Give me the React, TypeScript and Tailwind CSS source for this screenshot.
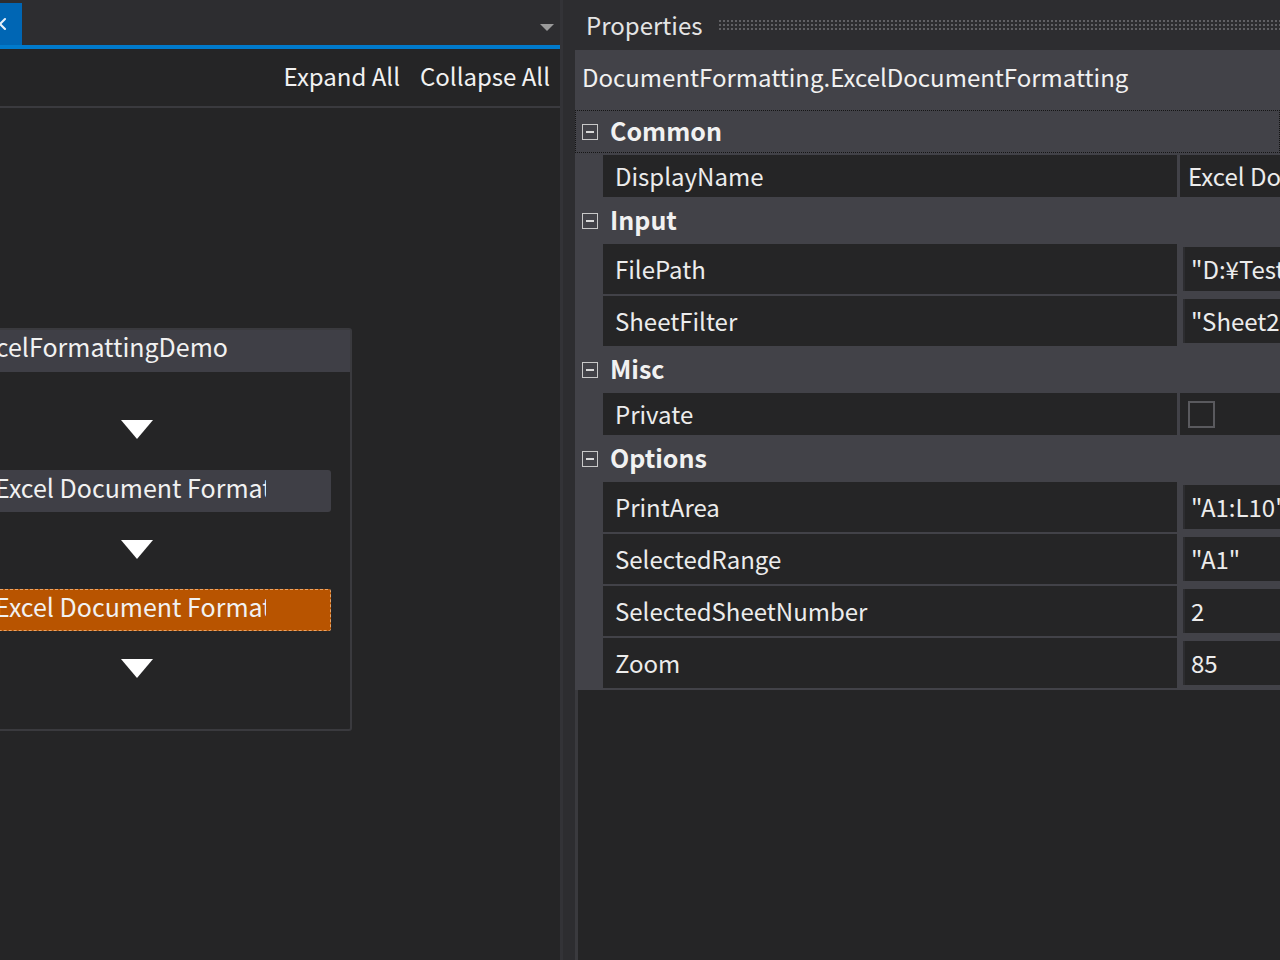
import { X } from 'lucide-react';

type Row =
  | { kind: 'cat'; label: string; focused?: boolean }
  | { kind: 'plain'; name: string; value: string }
  | { kind: 'text'; name: string; value: string }
  | { kind: 'check'; name: string };

const rows: Row[] = [
  { kind: 'cat', label: 'Common', focused: true },
  { kind: 'plain', name: 'DisplayName', value: 'Excel Document Formatting' },
  { kind: 'cat', label: 'Input' },
  { kind: 'text', name: 'FilePath', value: '"D:¥Test¥Sample.xlsx"' },
  { kind: 'text', name: 'SheetFilter', value: '"Sheet2"' },
  { kind: 'cat', label: 'Misc' },
  { kind: 'check', name: 'Private' },
  { kind: 'cat', label: 'Options' },
  { kind: 'text', name: 'PrintArea', value: '"A1:L10"' },
  { kind: 'text', name: 'SelectedRange', value: '"A1"' },
  { kind: 'text', name: 'SelectedSheetNumber', value: '2' },
  { kind: 'text', name: 'Zoom', value: '85' },
];

function FlowArrow() {
  return (
    <svg width="34" height="21" viewBox="0 0 34 21" className="block">
      <polygon points="1,1 33,1 17,20" fill="#ffffff" />
    </svg>
  );
}

function Activity({ selected }: { selected?: boolean }) {
  return (
    <div
      className={
        selected
          ? 'flex h-[42px] w-[388px] items-center rounded-[2px] border border-dashed border-[#e8a468] bg-[#b85400] pb-[6px] pl-[51px]'
          : 'flex h-[42px] w-[388px] items-center rounded-[3px] bg-[#3f3f46] pb-[6px] pl-[52px]'
      }
    >
      <span className="block w-[271px] overflow-hidden whitespace-nowrap text-[25px] text-[#f1f1f1]">
        Excel Document Formatting
      </span>
    </div>
  );
}

function CollapseBox() {
  return (
    <div className="flex h-[16px] w-[16px] items-center justify-center border border-[#c8c8c8]">
      <div className="h-[2px] w-[8px] bg-[#d8d8d8]" />
    </div>
  );
}

function PropRow({ row }: { row: Row }) {
  if (row.kind === 'cat') {
    return (
      <div
        className={
          'flex h-[43px] items-center gap-[12px] bg-[#424248] pl-[6px] ' +
          (row.focused ? 'border border-dotted border-[#151515]' : 'border border-transparent')
        }
      >
        <CollapseBox />
        <span className="pb-[2px] text-[25px] font-bold text-[#f1f1f1]">{row.label}</span>
      </div>
    );
  }
  const tall = row.kind === 'text';
  return (
    <div className={'flex pl-[28px] ' + (tall ? 'h-[50px]' : 'h-[42px]')}>
      <div className="flex w-[574px] items-center bg-[#252526] pl-[12px] text-[24px] text-[#ececec]">
        {row.name}
      </div>
      {row.kind === 'plain' && (
        <div className="ml-[3px] flex flex-1 items-center overflow-hidden whitespace-nowrap bg-[#252526] pl-[8px] text-[24px] text-[#ececec]">
          {row.value}
        </div>
      )}
      {row.kind === 'check' && (
        <div className="ml-[3px] flex flex-1 items-center bg-[#252526] pl-[8px]">
          <div className="h-[27px] w-[27px] border-2 border-[#5a5a5e]" />
        </div>
      )}
      {row.kind === 'text' && (
        <div className="my-[3px] ml-[6px] flex flex-1 items-center overflow-hidden whitespace-nowrap border-l-2 border-[#2d2d30] bg-[#252526] pl-[6px] text-[24px] text-[#ececec]">
          {row.value}
        </div>
      )}
    </div>
  );
}

export default function App() {
  return (
    <div className="flex h-[960px] w-[1280px] overflow-hidden bg-[#2d2d30] font-['Noto_Sans_CJK_JP','Noto_Sans',sans-serif]">
      {/* designer panel */}
      <div className="flex w-[563px] shrink-0 flex-col border-r-[3px] border-[#333337]">
        <div className="flex h-[45px] items-end bg-[#2d2d30]">
          <div className="flex h-[42px] w-[22px] items-center overflow-hidden bg-[#0066b4]">
            <X size={20} strokeWidth={2.5} className="-ml-[10px] text-[#e6f0fa]" />
          </div>
          <div className="flex h-full flex-1 items-center justify-end pr-[6px] pt-[10px]">
            <svg width="14" height="8" viewBox="0 0 14 8">
              <polygon points="0,0 14,0 7,7" fill="#9a9a9a" />
            </svg>
          </div>
        </div>
        <div className="h-[4px] bg-[#007acc]" />
        <div className="flex h-[59px] items-center justify-end gap-[20px] border-b-2 border-[#3a3a3e] bg-[#252526] pb-[4px] pr-[10px] text-[24px] text-[#f1f1f1]">
          <span>Expand All</span>
          <span>Collapse All</span>
        </div>
        <div className="flex-1 overflow-hidden bg-[#252526] pt-[220px]">
          <div className="-ml-[78px] w-[430px] rounded-[3px] border-2 border-[#3a3a3e]">
            <div className="flex h-[42px] items-center bg-[#3f3f46] pb-[8px] pl-[46px] text-[25px] text-[#f1f1f1]">
              ExcelFormattingDemo
            </div>
            <div className="flex flex-col items-center pb-[50px] pt-[47px]">
              <FlowArrow />
              <div className="h-[30px]" />
              <Activity />
              <div className="h-[27px]" />
              <FlowArrow />
              <div className="h-[29px]" />
              <Activity selected />
              <div className="h-[27px]" />
              <FlowArrow />
            </div>
          </div>
        </div>
      </div>

      <div className="w-[12px] shrink-0 bg-[#2d2d30]" />

      {/* properties panel */}
      <div className="flex w-[705px] shrink-0 flex-col">
        <div className="flex h-[50px] items-center gap-[16px] bg-[#2d2d30] pl-[11px]">
          <span className="text-[24px] text-[#e4e4e4]">Properties</span>
          <div className="h-[12px] flex-1 bg-[radial-gradient(circle,#606064_0.9px,transparent_1.2px)] bg-[length:4px_4px]" />
        </div>
        <div className="flex h-[60px] items-center bg-[#424248] pb-[6px] pl-[7px] text-[24px] text-[#f1f1f1]">
          DocumentFormatting.ExcelDocumentFormatting
        </div>
        <div className="flex flex-col gap-[2px] bg-[#424248] pb-[2px]">
          {rows.map((r, i) => (
            <PropRow key={i} row={r} />
          ))}
        </div>
        <div className="flex-1 border-l-[3px] border-[#3a3a3e] bg-[#252526]" />
      </div>
    </div>
  );
}
